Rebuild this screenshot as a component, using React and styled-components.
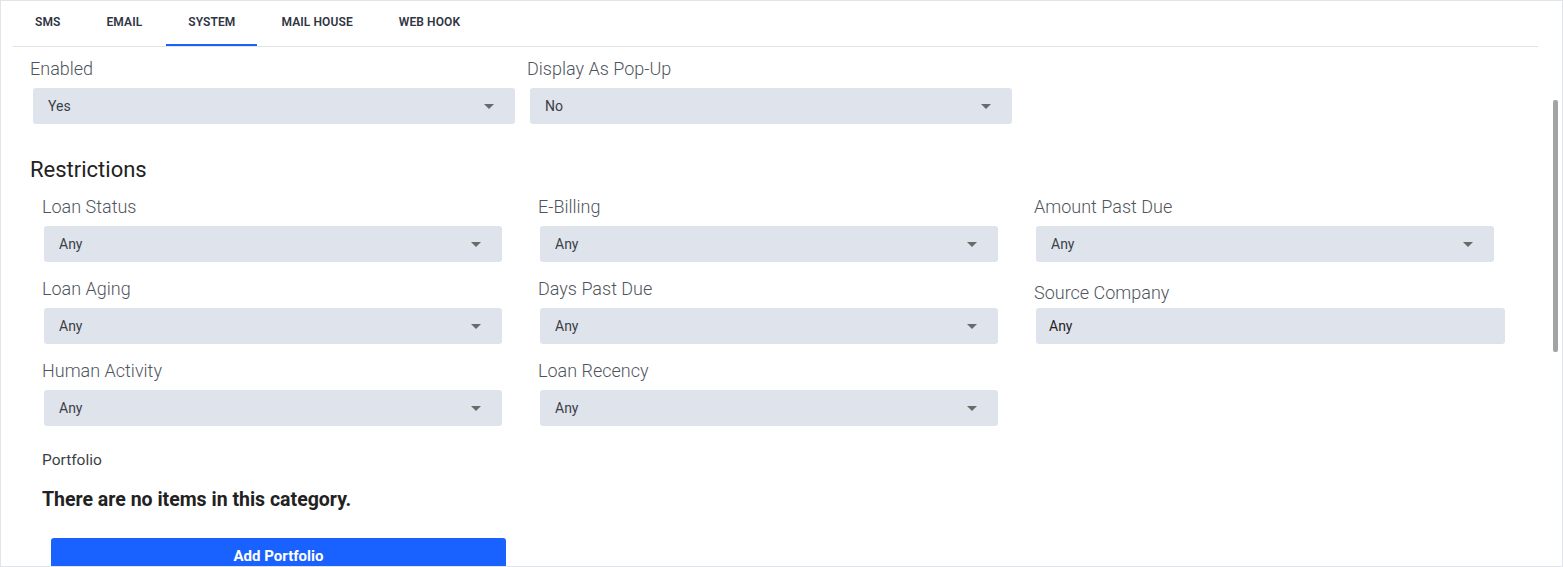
import styled, { createGlobalStyle } from "styled-components";

const GlobalStyle = createGlobalStyle`
  * { box-sizing: border-box; }
  body {
    margin: 0;
    background: #ffffff;
    font-family: Roboto, "Liberation Sans", Arial, sans-serif;
  }
`;

const tabs = ["SMS", "EMAIL", "SYSTEM", "MAIL HOUSE", "WEB HOOK"];

const restrictions = [
  { label: "Loan Status", value: "Any" },
  { label: "E-Billing", value: "Any" },
  { label: "Amount Past Due", value: "Any" },
  { label: "Loan Aging", value: "Any" },
  { label: "Days Past Due", value: "Any" },
  { label: "Source Company", value: "Any", text: true },
  { label: "Human Activity", value: "Any" },
  { label: "Loan Recency", value: "Any" },
];

const Select = ({ value }) => (
  <SelectBox>
    <span>{value}</span>
    <Caret />
  </SelectBox>
);

const App = () => {
  return (
    <>
      <GlobalStyle />
      <Frame>
        <TabBar>
          {tabs.map((t) => (
            <Tab key={t} $active={t === "SYSTEM"}>{t}</Tab>
          ))}
        </TabBar>
        <Content>
          <TopGrid>
            <Field>
              <Label>Enabled</Label>
              <Select value="Yes" />
            </Field>
            <Field>
              <Label>Display As Pop-Up</Label>
              <Select value="No" />
            </Field>
          </TopGrid>

          <Heading>Restrictions</Heading>

          <RestrictionGrid>
            {restrictions.map((r) => (
              <Field key={r.label}>
                <GridLabel $shifted={r.text}>{r.label}</GridLabel>
                {r.text ? <TextBox>{r.value}</TextBox> : <Select value={r.value} />}
              </Field>
            ))}
          </RestrictionGrid>

          <Portfolio>
            <SmallLabel>Portfolio</SmallLabel>
            <EmptyText>There are no items in this category.</EmptyText>
            <AddButton type="button">Add Portfolio</AddButton>
          </Portfolio>
        </Content>
        <ScrollThumb />
      </Frame>
    </>
  );
};

const Frame = styled.div`
  position: relative;
  width: 1563px;
  height: 567px;
  border: 1px solid #e3e4ea;
  overflow: hidden;
  background: #ffffff;
`;

const TabBar = styled.div`
  display: flex;
  gap: 2px;
  margin: 0 24px 0 12px;
  height: 46px;
  border-bottom: 1px solid #e2e2e2;
`;

const Tab = styled.div`
  position: relative;
  padding: 14px 22px 0;
  height: 45px;
  font-size: 12px;
  line-height: 14px;
  font-weight: 600;
  letter-spacing: 0.1px;
  color: #2f3542;

  &::after {
    content: "";
    position: absolute;
    left: 0;
    right: 0;
    bottom: 0;
    height: 2px;
    background: ${(p) => (p.$active ? "#1a62ff" : "transparent")};
  }
`;

const Content = styled.div`
  padding: 11px 0 0 29px;
`;

const TopGrid = styled.div`
  display: grid;
  grid-template-columns: 482px 482px;
  column-gap: 15px;
  padding-left: 3px;
`;

const Field = styled.div`
  display: flex;
  flex-direction: column;
`;

const Label = styled.div`
  margin: 1px 0 9px -3px;
  font-size: 18px;
  line-height: 20px;
  font-weight: 300;
  color: #50555d;
`;

const GridLabel = styled(Label)`
  margin: ${(p) => (p.$shifted ? "5px 0 5px -2px" : "1px 0 9px -2px")};
`;

const SelectBox = styled.div`
  display: flex;
  align-items: center;
  justify-content: space-between;
  height: 36px;
  padding: 0 21px 0 15px;
  background: #dfe3ec;
  border-radius: 3px;
  font-size: 14px;
  color: #3a3f47;
`;

const Caret = styled.span`
  width: 0;
  height: 0;
  border-left: 5px solid transparent;
  border-right: 5px solid transparent;
  border-top: 5px solid #6a6a6a;
`;

const TextBox = styled.div`
  display: flex;
  align-items: center;
  width: calc(100% + 11px);
  height: 36px;
  padding: 0 13px;
  background: #dfe3ec;
  border-radius: 3px;
  font-size: 14px;
  color: #1f2226;
`;

const Heading = styled.h2`
  margin: 33px 0 13px;
  font-size: 22px;
  line-height: 26px;
  font-weight: 400;
  color: #222222;
`;

const RestrictionGrid = styled.div`
  display: grid;
  grid-template-columns: repeat(3, 458px);
  column-gap: 38px;
  row-gap: 16px;
  padding-left: 14px;
`;

const Portfolio = styled.div`
  display: flex;
  flex-direction: column;
  align-items: flex-start;
  padding: 24px 0 0 12px;
`;

const SmallLabel = styled.div`
  font-size: 15.5px;
  line-height: 20px;
  color: #3b3f46;
`;

const EmptyText = styled.div`
  margin-top: 18px;
  font-size: 19.5px;
  line-height: 24px;
  font-weight: 700;
  color: #222222;
`;

const AddButton = styled.button`
  margin: 26px 0 0 9px;
  width: 455px;
  height: 36px;
  border: none;
  border-radius: 3px;
  background: #1a62ff;
  color: #ffffff;
  font-family: inherit;
  font-size: 15px;
  font-weight: 700;
`;

const ScrollThumb = styled.div`
  position: absolute;
  top: 99px;
  left: 1552px;
  width: 5px;
  height: 252px;
  border-radius: 2px;
  background: #a3a3a3;
`;

export default App;
